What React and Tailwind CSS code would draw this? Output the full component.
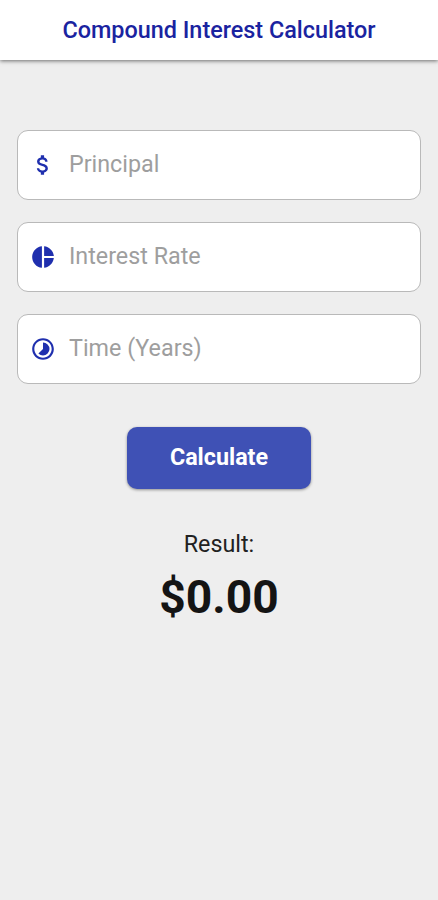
import React, { useState } from 'react';
import { MdAttachMoney, MdPieChart, MdTimelapse } from 'react-icons/md';

const Field = ({ icon: Icon, label, value, onChange }) => (
    <label className="flex items-center h-[70px] pl-3 pr-4 bg-white border border-[#b9b9b9] rounded-[11px]">
        <Icon className="shrink-0 text-[#1f2fae]" size={26} />
        <input
            type="text"
            inputMode="decimal"
            placeholder={label}
            value={value}
            onChange={(e) => onChange(e.target.value)}
            className="ml-[13px] -mt-px w-full min-w-0 text-[23.3px] text-gray-900 placeholder:text-[#9e9e9e] outline-none"
        />
    </label>
);

const App = () => {
    const [principal, setPrincipal] = useState('');
    const [rate, setRate] = useState('');
    const [years, setYears] = useState('');
    const [result, setResult] = useState(0);

    // Interest is compounded once a year
    const calculate = () => {
        const total = Number(principal) * Math.pow(1 + Number(rate) / 100, Number(years));
        setResult(Number.isFinite(total) ? total : 0);
    };

    return (
        <div className="flex flex-col min-h-screen bg-[#eeeeee] font-['Roboto',sans-serif]">
            <header className="flex justify-center h-[60px] pt-[13px] bg-white shadow-[0_1px_4px_rgba(0,0,0,0.55)]">
                <h1 className="text-[23.4px] leading-[34px] font-medium text-[#1a23a0]">Compound Interest Calculator</h1>
            </header>

            <main className="flex flex-col px-[17px] pt-[70px]">
                <div className="flex flex-col gap-[21.8px]">
                    <Field icon={MdAttachMoney} label="Principal" value={principal} onChange={setPrincipal} />
                    <Field icon={MdPieChart} label="Interest Rate" value={rate} onChange={setRate} />
                    <Field icon={MdTimelapse} label="Time (Years)" value={years} onChange={setYears} />
                </div>

                <button
                    type="button"
                    onClick={calculate}
                    className="self-center mt-[43.4px] w-[184px] h-[62px] pb-0.5 bg-[#3f51b5] text-white text-[23.3px] font-bold rounded-[10px] shadow-[0_1px_3px_rgba(0,0,0,0.4)]"
                >
                    Calculate
                </button>

                {/* Result */}
                <p className="mt-[39px] text-center text-[23.3px] leading-8 text-[#212121]">Result:</p>
                <p className="mt-[9px] text-center text-[46.2px] leading-[56px] font-bold text-[#141414]">${result.toFixed(2)}</p>
            </main>
        </div>
    );
};

export default App;
